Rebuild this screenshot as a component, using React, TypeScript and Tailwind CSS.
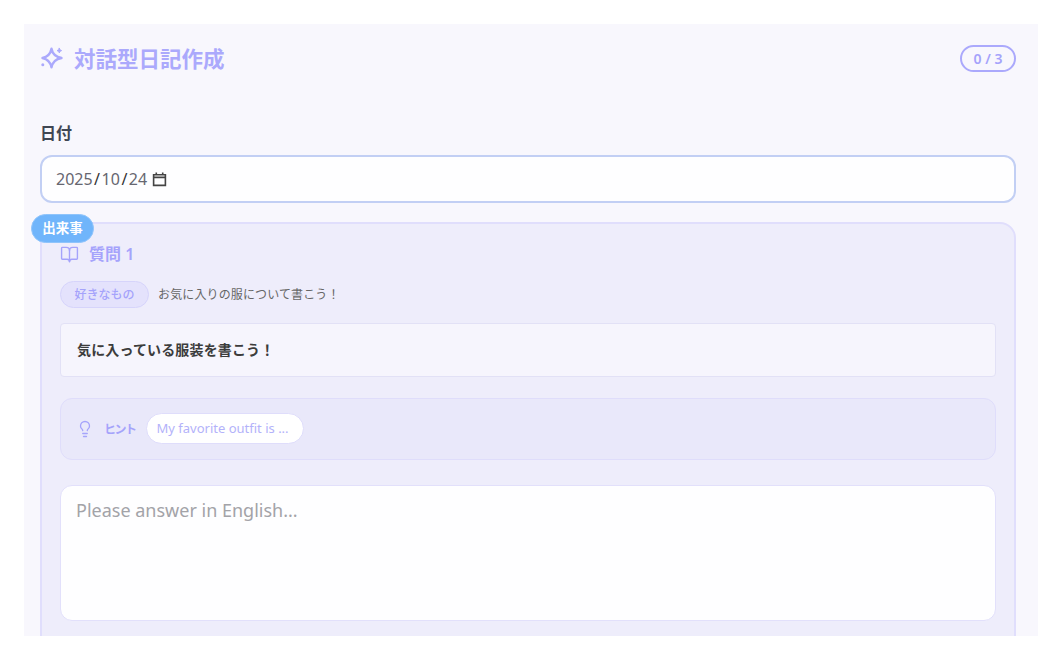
import { BookOpen, Lightbulb } from "lucide-react";

const font = { fontFamily: '"Noto Sans", "Noto Sans CJK JP", sans-serif' };

function Spark() {
  return (
    <svg viewBox="0 0 24 24" className="h-6 w-6 text-[#aba9fc]" fill="none" stroke="currentColor" strokeWidth="2.4" strokeLinejoin="round" strokeLinecap="round">
      <path d="M11.5 1.8c.9 5 3.8 8 10 9.2-6.2 1.2-9.1 4.2-10 9.4-.9-5.2-3.8-8.2-9-9.4 5.200-1.2 8.100-4.200 9-9.200z" />
      <path d="M19.300 1.300l.7 1.600 1.600.7-1.600.7-.7 1.600-.7-1.600-1.600-.7 1.600-.7z" fill="currentColor" strokeWidth="1" />
      <circle cx="2.800" cy="17.800" r="1.500" fill="currentColor" stroke="none" />
    </svg>
  );
}

export default function App() {
  return (
    <div
      className="h-[660px] w-[1060px] overflow-hidden bg-white pt-6 pl-6 pr-[22px] pb-6 font-['Noto_Sans','Noto_Sans_CJK_JP',sans-serif]"
      style={font}
    >
      <div className="h-full overflow-hidden bg-[#f8f7fd] pl-4 pr-[22px] pt-[21px]">
        <div className="flex h-[27px] items-center justify-between">
          <div className="flex items-center gap-[10px]">
            <Spark />
            <h1 className="text-[21.5px] font-bold leading-none text-[#aba9fc]">対話型日記作成</h1>
          </div>
          <div className="flex h-[27px] w-14 items-center justify-center rounded-full border-2 border-[#aba9fc] text-[14px] font-semibold text-[#a5a3fb]">
            0 / 3
          </div>
        </div>
        <div className="mt-[49px] text-[16px] font-semibold leading-[24px] text-[#3f4653]">日付</div>
        <div className="mt-[10px] flex h-12 items-center gap-[5px] rounded-xl border-2 border-[#c2cff4] bg-[#fefeff] px-[14px] text-[16px] text-[#666670]">
          <span className="flex items-center">
            <span>2025</span>
            <span className="mx-[1.5px] text-[#333]">/</span>
            <span>10</span>
            <span className="mx-[1.5px] text-[#333]">/</span>
            <span>24</span>
          </span>
          <svg viewBox="0 0 14 14" className="h-[15px] w-[15px] text-[#444]" fill="none" stroke="currentColor">
            <path d="M1.500 2.500h11v10h-11z M1.500 5h11" strokeWidth="1.500" />
            <path d="M4 .5v2M10 .5v2" strokeWidth="1.500" />
          </svg>
        </div>
        <section className="relative mt-[19px] h-[500px] rounded-2xl border-2 border-[#e0defc] bg-[#eeedfb] px-[18px] pt-[18px]">
          <div className="absolute -left-[11px] -top-[10px] flex h-[29px] w-[63px] items-center justify-center rounded-full border border-[#8fc4fb] bg-[#70b5fb] text-[13.5px] font-semibold text-white">
            出来事
          </div>
          <div className="flex h-6 items-center gap-[10px] text-[#a5a3fb]">
            <BookOpen className="h-[19px] w-[19px]" strokeWidth={1.75} />
            <span className="text-[16px] font-semibold leading-none">質問 1</span>
          </div>
          <div className="mt-[15px] flex items-center gap-[9px]">
            <span className="flex h-[27px] w-[89px] items-center justify-center rounded-full border border-[#d6d4fb] bg-[#e4e2fc] text-[12px] font-medium text-[#a5a3fb]">
              好きなもの
            </span>
            <span className="mt-[1px] text-[12px] tracking-[0.13px] text-[#666]">お気に入りの服について書こう！</span>
          </div>
          <div className="mt-[15px] flex h-[54px] items-center rounded border border-[#e2e1f6] bg-[#f6f5fd] px-4 text-[14px] font-semibold tracking-[0.15px] text-[#3c3c3c]">
            <span className="-mt-[1px]">気に入っている服装を書こう！</span>
          </div>
          <div className="mt-[21px] flex h-[62px] items-center rounded-xl border border-[#dfddfb] bg-[#e9e8fa] pl-[15px]">
            <Lightbulb className="h-[18px] w-[18px] text-[#a5a3fb]" strokeWidth={1.75} />
            <span className="ml-[10px] mt-[1px] text-[12px] font-bold tracking-[-1.5px] text-[#a5a3fb]">ヒント</span>
            <span className="-mt-px ml-[10px] flex h-[31px] w-[158px] items-center whitespace-nowrap rounded-full border border-[#dfddfb] bg-white px-[10px] text-[13px] text-[#b3b2fa]">
              My favorite outfit is ...
            </span>
          </div>
          <textarea
            readOnly
            placeholder="Please answer in English..."
            className="mt-[25px] block h-[136px] w-full resize-none rounded-xl border border-[#e2e0fb] bg-[#fefeff] px-[15px] py-[10px] text-[18px] leading-[28px] outline-none placeholder:text-[#a3a3a8]"
          />
        </section>
      </div>
    </div>
  );
}
